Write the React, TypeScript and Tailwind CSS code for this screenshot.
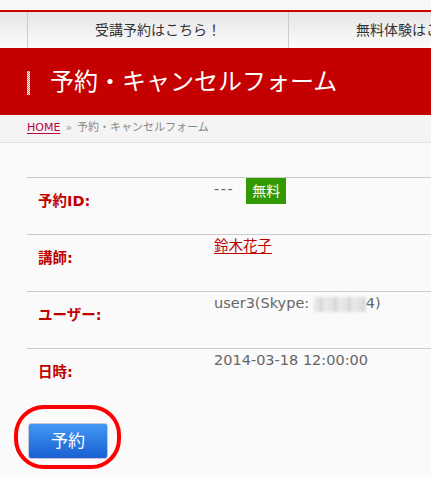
import React from "react";

const font = { fontFamily: '"DejaVu Sans", "Noto Sans CJK JP", sans-serif' };

function Row({ label, children }: { label: string; children: React.ReactNode }) {
  return (
    <div className="flex h-[57px] border-t border-[#cccccc]">
      <div className="w-[187px] shrink-0 pl-[11px] pt-[13px] text-[14.5px] font-bold leading-[20px] text-[#c00000]">
        {label}
      </div>
      <div className="pt-[1px] text-[14.5px] leading-[20px] text-[#666666]">{children}</div>
    </div>
  );
}

export default function App() {
  return (
    <div className="w-[431px] h-[477px] overflow-hidden bg-[#fafafa]" style={font}>
      <div className="h-[10px] bg-[#f8f8f8]" />
      <div className="flex h-[38px] border-t-2 border-[#c40000] bg-gradient-to-b from-[#e6e6e6] to-[#fbfbfb] overflow-hidden whitespace-nowrap">
        <div className="w-[28px] shrink-0 border-r border-[#cccccc]" />
        <div className="w-[261px] shrink-0 border-r border-[#cccccc] flex items-center justify-center text-[14px] text-[#333333]">
          受講予約はこちら！
        </div>
        <div className="w-[261px] shrink-0 border-r border-[#cccccc] flex items-center justify-center text-[14px] text-[#333333]">
          無料体験はこちら！
        </div>
      </div>
      <div className="h-[67px] bg-[#c40000] flex items-center pl-[27px]">
        <span className="w-[3px] h-[24px] mt-[3px] bg-[repeating-conic-gradient(#ffffff_0_25%,#e07070_0_50%)] bg-[length:2px_2px]" />
        <span className="ml-[20px] text-[24px] leading-none text-white whitespace-nowrap">
          予約・キャンセルフォーム
        </span>
      </div>
      <div className="h-[28px] bg-[#f4f4f4] border-b border-[#e2e2e2] flex items-center pl-[27px] text-[11px] whitespace-nowrap">
        <span className="text-[#b8003c] underline underline-offset-2">HOME</span>
        <span className="ml-[5px] text-[#999999]">»</span>
        <span className="ml-[5px] text-[#888888]">予約・キャンセルフォーム</span>
      </div>
      <div className="pl-[27px] pt-[34px]">
        <Row label="予約ID:">
          <div className="flex items-start">
            <span className="tracking-[1.5px] text-[#666666]">---</span>
            <span className="ml-[12px] -mt-[1px] h-[26px] px-[6px] bg-[#339900] text-white text-[14px] leading-[26px]">
              無料
            </span>
          </div>
        </Row>
        <Row label="講師:">
          <span className="text-[#c00000] underline underline-offset-2">鈴木花子</span>
        </Row>
        <Row label="ユーザー:">
          <span className="whitespace-nowrap">
            user3(Skype:{" "}
            <span className="inline-block w-[52px] h-[15px] align-middle bg-[repeating-linear-gradient(90deg,#e4e4e4_0_6px,#d4d4d4_6px_9px,#e8e8e8_9px_14px)] blur-[1.5px]" />
            4)
          </span>
        </Row>
        <Row label="日時:">
          <span className="whitespace-nowrap">2014-03-18 12:00:00</span>
        </Row>
        <div className="pt-[18px] pl-[1px]">
          <div className="relative inline-block">
            <button className="w-[80px] h-[36px] rounded-[3px] border border-[#c3cad6] bg-gradient-to-b from-[#4298f3] to-[#1b5fd3] text-white text-[17px] leading-none">
              予約
            </button>
            <span className="pointer-events-none absolute -left-[14px] -right-[13px] -top-[18px] -bottom-[10px] rounded-[30px] border-[4px] border-[#ff0000]" />
          </div>
        </div>
      </div>
    </div>
  );
}
